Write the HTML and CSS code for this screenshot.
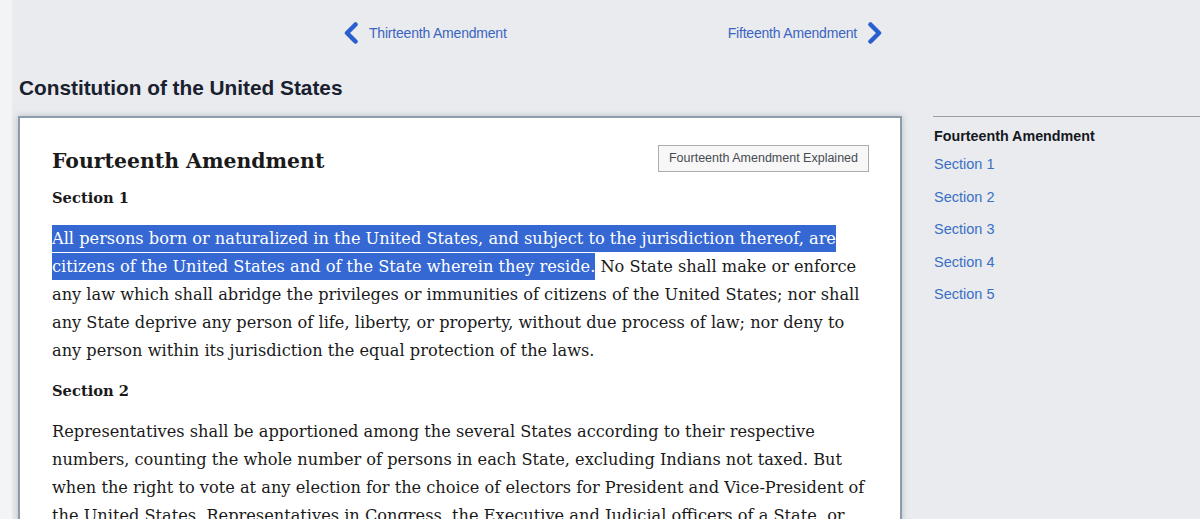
FILE: index.html
```html
<!DOCTYPE html>
<html lang="en">
<head>
<meta charset="utf-8">
<title>Fourteenth Amendment - Constitution of the United States</title>
<link rel="stylesheet" href="styles.css">
</head>
<body>
<div class="page">
  <div class="main">
    <nav class="pager">
      <a class="pager-link" href="#">
        <svg class="chev" viewBox="0 0 16 22" width="16" height="22"><path d="M12.5 2.5 L4 11 L12.5 19.5" fill="none" stroke="currentColor" stroke-width="4.5" stroke-linecap="round" stroke-linejoin="round"/></svg>
        <span>Thirteenth Amendment</span>
      </a>
      <a class="pager-link" href="#">
        <span>Fifteenth Amendment</span>
        <svg class="chev" viewBox="0 0 16 22" width="16" height="22"><path d="M3.5 2.5 L12 11 L3.5 19.5" fill="none" stroke="currentColor" stroke-width="4.5" stroke-linecap="round" stroke-linejoin="round"/></svg>
      </a>
    </nav>

    <h1 class="doc-title">Constitution of the United States</h1>

    <article class="card">
      <header class="card-head">
        <h2 class="amend-title">Fourteenth Amendment</h2>
        <a class="explain-btn" href="#">Fourteenth Amendment Explained</a>
      </header>

      <h3 class="sec-title">Section 1</h3>
      <p class="sec-text"><span class="sel">All persons born or naturalized in the United States, and subject to the jurisdiction thereof, are citizens of the United States and of the State wherein they reside.</span> No State shall make or enforce any law which shall abridge the privileges or immunities of citizens of the United States; nor shall any State deprive any person of life, liberty, or property, without due process of law; nor deny to any person within its jurisdiction the equal protection of the laws.</p>

      <h3 class="sec-title">Section 2</h3>
      <p class="sec-text">Representatives shall be apportioned among the several States according to their respective numbers, counting the whole number of persons in each State, excluding Indians not taxed. But when the right to vote at any election for the choice of electors for President and Vice-President of the United States, Representatives in Congress, the Executive and Judicial officers of a State, or the members of the Legislature thereof, is denied to any of the male inhabitants of such State.</p>
    </article>
  </div>

  <aside class="toc">
    <div class="toc-title">Fourteenth Amendment</div>
    <ul class="toc-list">
      <li><a href="#">Section 1</a></li>
      <li><a href="#">Section 2</a></li>
      <li><a href="#">Section 3</a></li>
      <li><a href="#">Section 4</a></li>
      <li><a href="#">Section 5</a></li>
    </ul>
  </aside>
</div>
</body>
</html>
```

FILE: styles.css
```css
html, body {
  margin: 0;
  height: 100%;
  overflow: hidden;
}

body {
  background: #f3f4f6;
  font-family: "Liberation Sans", Arial, sans-serif;
}

.page {
  margin-left: 12px;
  min-height: 100%;
  background: #e9ebee;
  display: flex;
  align-items: flex-start;
}

.main {
  width: 884px;
  padding-left: 6px;
}

/* previous / next amendment links */
.pager {
  width: 540px;
  margin-left: 325px;
  height: 66px;
  display: flex;
  justify-content: space-between;
  align-items: center;
}

.pager-link {
  display: flex;
  align-items: center;
  gap: 10px;
  color: #3b64c2;
  text-decoration: none;
  font-size: 14px;
  letter-spacing: -0.2px;
}

.pager-link .chev {
  color: #2a5fcf;
}

.doc-title {
  margin: 10px 0 16px 1px;
  font-size: 20.8px;
  line-height: 24px;
  font-weight: bold;
  color: #19202f;
}

/* document card */
.card {
  background: #fff;
  border: 2px solid #8d9cab;
  box-shadow: 0 0 6px rgba(90, 100, 115, 0.35);
  padding: 27px 31px 40px 32px;
  font-family: "DejaVu Serif", Georgia, serif;
  color: #1a1a1a;
  height: 420px;
}

.card-head {
  display: flex;
  justify-content: space-between;
  align-items: flex-start;
}

.amend-title {
  margin: 3px 0 0;
  font-size: 20.4px;
  line-height: 26px;
  font-weight: bold;
}

.explain-btn {
  font-family: "Liberation Sans", Arial, sans-serif;
  font-size: 12.5px;
  color: #474b52;
  text-decoration: none;
  background: #f7f7f7;
  border: 1px solid #acacac;
  padding: 5px 10px 6px;
  line-height: 14px;
}

.sec-title {
  margin: 14px 0 17px;
  font-size: 14.7px;
  line-height: 20px;
  font-weight: bold;
}

.sec-text {
  margin: 0 0 16px;
  font-size: 16.2px;
  line-height: 28px;
}

.sel {
  background: #3568d3;
  color: #fff;
  padding: 4px 0;
}

/* table of contents */
.toc {
  margin-top: 116px;
  margin-left: 31px;
  flex: 1;
  border-top: 1px solid #9a9ea5;
  padding-top: 10px;
  padding-left: 1px;
}

.toc-title {
  font-size: 14.3px;
  font-weight: bold;
  color: #15181e;
  line-height: 18px;
}

.toc-list {
  list-style: none;
  margin: 0;
  padding: 0;
}

.toc-list li {
  margin-top: 14.5px;
  line-height: 18px;
}

.toc-list li:first-child {
  margin-top: 10px;
}

.toc-list a {
  font-size: 14.5px;
  color: #3a6fc6;
  text-decoration: none;
}
```
